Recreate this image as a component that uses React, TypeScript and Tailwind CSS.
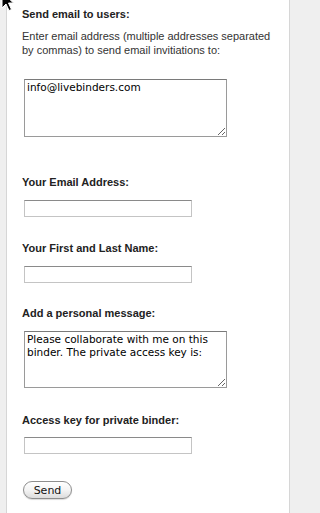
import type { ReactNode } from "react";

const label = "font-['Liberation_Sans',Arial,sans-serif] text-[11px] font-bold leading-[14px] text-[#222]";
const field =
  "block ml-[2px] h-[17px] w-[168px] border border-[#c4c4c4] border-t-[#8a8a8a] bg-white outline-none";
const area =
  "block ml-[2px] w-[203px] resize border border-[#9a9a9a] border-t-[#7a7a7a] bg-white px-[2px] py-[1px] font-['DejaVu_Sans',Verdana,sans-serif] text-[10.5px] leading-[13px] text-black outline-none";

function Label({ children, className }: { children: ReactNode; className: string }) {
  return <div className={`${label} ${className}`}>{children}</div>;
}

function Cursor() {
  return (
    <svg className="absolute left-0 top-0" width="14" height="12" viewBox="0 0 14 12">
      <g transform="translate(2,-8)">
        <path
          d="M0 0 L0 16 L4 12 L7 18.5 L9.5 17.5 L6.5 11 L11.5 11 Z"
          fill="#000"
          stroke="#fff"
          strokeWidth="1"
          strokeLinejoin="round"
        />
      </g>
    </svg>
  );
}

export default function App() {
  return (
    <div className="relative h-[513px] w-full min-w-[299px] overflow-hidden bg-[#efefef]">
      <div className="ml-[6px] h-full w-[284px] border-x border-[#d6d6d6] bg-white pl-[15px] pt-[7px]">
        <Label className="">Send email to users:</Label>
        <p className="mt-[8px] w-[255px] font-['Liberation_Sans',Arial,sans-serif] text-[11px] leading-[14px] text-[#333]">
          Enter email address (multiple addresses separated by commas) to send email invitiations to:
        </p>
        <textarea className={`${area} mt-[22px] h-[58px]`} defaultValue="info@livebinders.com" />

        <Label className="mt-[38px]">Your Email Address:</Label>
        <input type="text" className={`${field} mt-[11px]`} />

        <Label className="mt-[24px]">Your First and Last Name:</Label>
        <input type="text" className={`${field} mt-[11px]`} />

        <Label className="mt-[23px]">Add a personal message:</Label>
        <textarea
          className={`${area} mt-[11px] h-[57px]`}
          defaultValue="Please collaborate with me on this binder. The private access key is:"
        />

        <Label className="mt-[25px]">Access key for private binder:</Label>
        <input type="text" className={`${field} mt-[10px]`} />

        <button
          type="button"
          className="mt-[27px] ml-[1px] flex h-[18px] w-[49px] items-center justify-center rounded-full border border-[#8e8e8e] bg-gradient-to-b from-white via-[#f4f4f4] to-[#dcdcdc] font-['DejaVu_Sans',Verdana,sans-serif] text-[11px] leading-none text-[#111] shadow-[0_1px_1px_rgba(0,0,0,0.15)]"
        >
          Send
        </button>
      </div>
      <Cursor />
    </div>
  );
}
